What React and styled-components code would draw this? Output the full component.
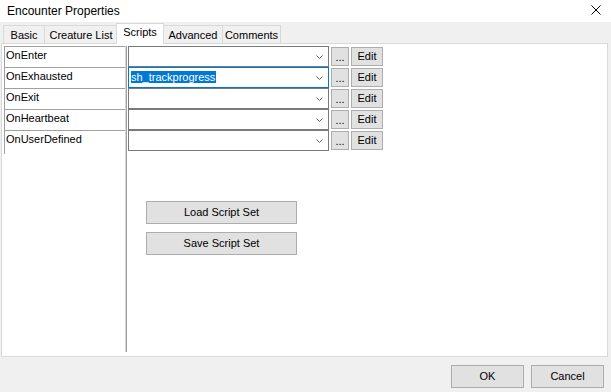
import React from "react";
import styled, { createGlobalStyle } from "styled-components";

const Global = createGlobalStyle`
  html, body { margin: 0; padding: 0; background: #f0f0f0; }
  body { font-family: "Liberation Sans", Arial, sans-serif; font-size: 11px; color: #000; }
  * { box-sizing: border-box; }
`;

const Window = styled.div`
  width: 611px;
  height: 392px;
  display: flex;
  flex-direction: column;
  background: #f0f0f0;
  overflow: hidden;
`;

const TitleBar = styled.div`
  height: 22px;
  background: #fff;
  display: flex;
  align-items: center;
  justify-content: space-between;
  padding: 0 10px 0 7px;
`;

const Title = styled.span`
  font-family: "Liberation Sans", Arial, sans-serif;
  font-size: 12px;
  line-height: 14px;
  padding-bottom: 1px;
`;

const CloseIcon = styled.svg`
  width: 10px;
  height: 10px;
  margin-bottom: 3px;
`;

const TabStrip = styled.div`
  height: 21px;
  display: flex;
  align-items: flex-end;
  padding-left: 3px;
  position: relative;
  z-index: 1;
`;

const Tab = styled.div`
  width: ${(p) => p.$w}px;
  height: ${(p) => (p.$active ? 21 : 18)}px;
  margin-left: ${(p) => (p.$first ? 0 : p.$active ? -2 : -1)}px;
  margin-bottom: ${(p) => (p.$active ? -1 : 0)}px;
  background: ${(p) => (p.$active ? "#fff" : "#f0f0f0")};
  border: 1px solid #d9d9d9;
  border-bottom: none;
  text-align: center;
  font-size: 11px;
  line-height: 13px;
  padding-top: ${(p) => (p.$active ? 2 : 3)}px;
  position: relative;
  z-index: ${(p) => (p.$active ? 2 : 1)};
`;

const TabPage = styled.div`
  height: 314px;
  margin: 0 3px 0 1px;
  background: #fff;
  border: 1px solid #d9d9d9;
  display: flex;
  align-items: flex-start;
  padding: 2px 0 0 2px;
`;

const LabelColumn = styled.div`
  width: 122px;
  display: flex;
  flex-direction: column;
`;

const Label = styled.div`
  height: 21px;
  border-top: 1px solid #a0a0a0;
  border-left: 1px solid #a0a0a0;
  padding: 2px 0 0 1px;
  line-height: 13px;
  &:last-child { height: 24px; }
`;

const Divider = styled.div`
  width: 2px;
  height: 306px;
  border-left: 1px solid #d4d4d4;
  border-right: 1px solid #a0a0a0;
  margin-left: -1px;
`;

const ScriptColumn = styled.div`
  margin-left: 1px;
  display: flex;
  flex-direction: column;
`;

const Row = styled.div`
  display: flex;
  align-items: center;
  gap: 2px;
  height: 21px;
`;

const Combo = styled.div`
  width: 201px;
  height: 21px;
  border: 1px solid ${(p) => (p.$focused ? "#0078d7" : "#7a7a7a")};
  background: #fff;
  display: flex;
  align-items: center;
  justify-content: space-between;
  padding: 0 5px 0 2px;
`;

const Selected = styled.span`
  background: #0078d7;
  color: #fff;
  line-height: 13px;
  padding: 0 1px 0 0;
`;

const Chevron = styled.svg`
  width: 7px;
  height: 4px;
  margin-top: 1px;
`;

const SmallButton = styled.div`
  width: ${(p) => p.$w}px;
  height: 19px;
  background: #e1e1e1;
  border: 1px solid #adadad;
  display: flex;
  justify-content: center;
  align-items: ${(p) => (p.$low ? "flex-end" : "center")};
  line-height: 13px;
  padding-bottom: ${(p) => (p.$low ? 1 : 0)}px;
`;

const SetButtons = styled.div`
  display: flex;
  flex-direction: column;
  gap: 8px;
  margin: 50px 0 0 18px;
`;

const WideButton = styled.div`
  width: 151px;
  height: 23px;
  background: #e1e1e1;
  border: 1px solid #adadad;
  display: flex;
  align-items: center;
  justify-content: center;
  line-height: 13px;
`;

const Footer = styled.div`
  flex: 1;
  display: flex;
  justify-content: flex-end;
  align-items: flex-start;
  gap: 7px;
  padding: 8px 7px 0 0;
`;

const DialogButton = styled.div`
  width: 73px;
  height: 23px;
  background: #e1e1e1;
  border: 1px solid #adadad;
  display: flex;
  align-items: center;
  justify-content: center;
  line-height: 13px;
`;

const events = ["OnEnter", "OnExhausted", "OnExit", "OnHeartbeat", "OnUserDefined"];
const values = { OnExhausted: "sh_trackprogress" };

const tabs = [
  { name: "Basic", w: 42 },
  { name: "Creature List", w: 74 },
  { name: "Scripts", w: 48, active: true },
  { name: "Advanced", w: 60 },
  { name: "Comments", w: 59 },
];

export default function App() {
  return (
    <Window>
      <Global />
      <TitleBar>
        <Title>Encounter Properties</Title>
        <CloseIcon viewBox="0 0 10 10">
          <path d="M0.5 0.5 L9.5 9.5 M9.5 0.5 L0.5 9.5" stroke="#000" strokeWidth="1" fill="none" />
        </CloseIcon>
      </TitleBar>
      <TabStrip>
        {tabs.map((t, i) => (
          <Tab key={t.name} $w={t.w} $active={t.active} $first={i === 0}>
            {t.name}
          </Tab>
        ))}
      </TabStrip>
      <TabPage>
        <LabelColumn>
          {events.map((e) => (
            <Label key={e}>{e}</Label>
          ))}
        </LabelColumn>
        <Divider />
        <ScriptColumn>
          {events.map((e) => (
            <Row key={e}>
              <Combo $focused={!!values[e]}>
                <span>{values[e] ? <Selected>{values[e]}</Selected> : null}</span>
                <Chevron viewBox="0 0 7 4">
                  <path d="M0.5 0.5 L3.5 3.5 L6.5 0.5" stroke="#606060" strokeWidth="1" fill="none" />
                </Chevron>
              </Combo>
              <SmallButton $w={18} $low>...</SmallButton>
              <SmallButton $w={32}>Edit</SmallButton>
            </Row>
          ))}
          <SetButtons>
            <WideButton>Load Script Set</WideButton>
            <WideButton>Save Script Set</WideButton>
          </SetButtons>
        </ScriptColumn>
      </TabPage>
      <Footer>
        <DialogButton>OK</DialogButton>
        <DialogButton>Cancel</DialogButton>
      </Footer>
    </Window>
  );
}
